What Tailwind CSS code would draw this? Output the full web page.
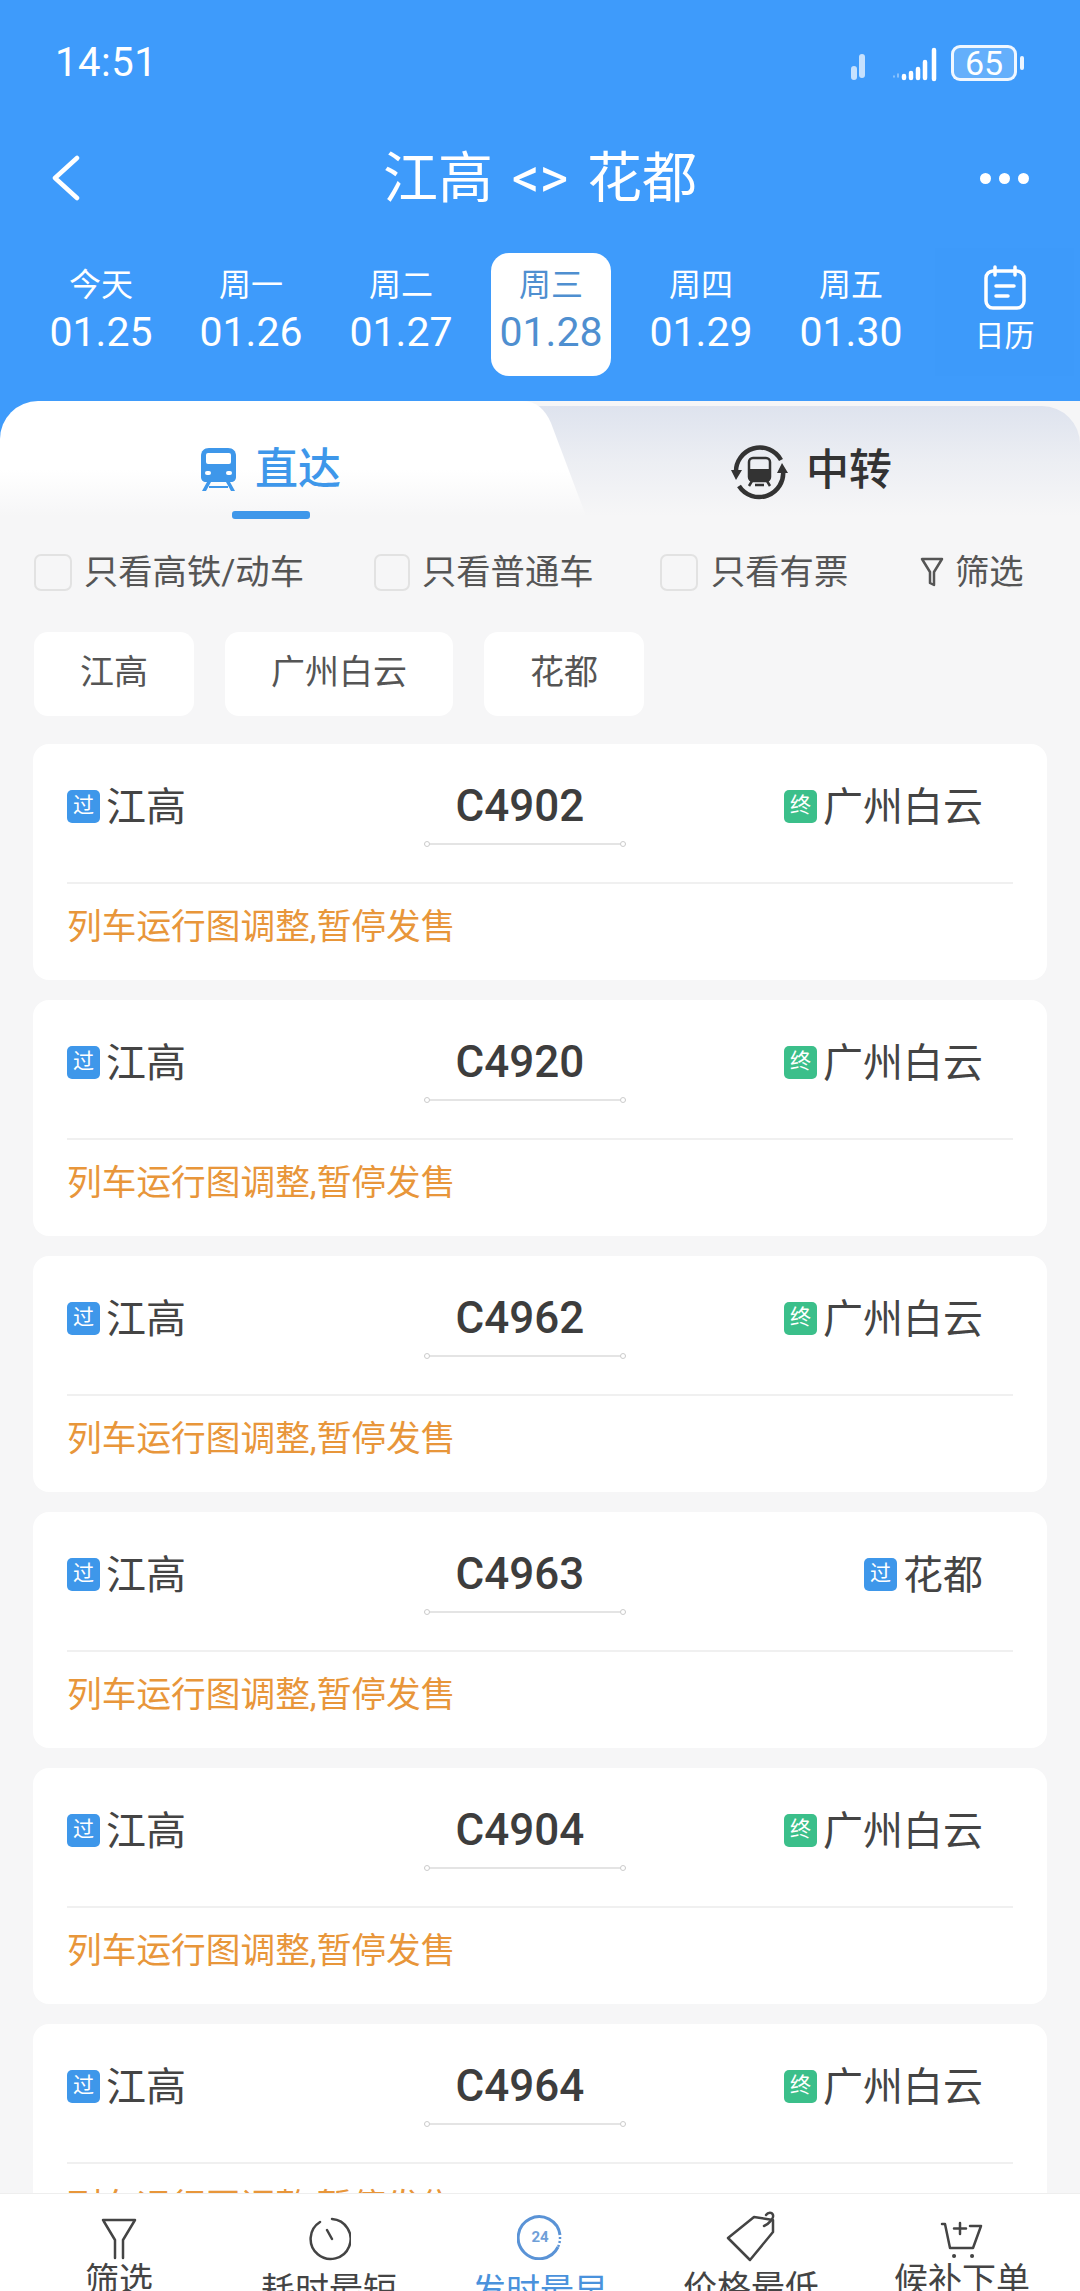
<!doctype html>
<html lang="zh">
<head>
<meta charset="utf-8">
<script src="https://cdn.jsdelivr.net/npm/@tailwindcss/browser@4"></script>
</head>
<body>
<div class="relative w-[1080px] h-[2291px] overflow-hidden bg-[#3e9bfb] font-['Roboto','Noto_Sans_CJK_SC',sans-serif] text-[#333]">

  <!-- header -->
  <header class="h-[401px] text-white">
    <div class="h-[126px] flex items-center justify-between pl-[55px] pr-[56px]">
      <span class="text-[40px] tracking-[0.5px]">14:51</span>
      <div class="flex items-center">
        <svg class="w-[100px] h-[40px]" viewBox="0 0 100 40" fill="none" stroke="#fff" stroke-linecap="round">
          <path d="M12 34v-8M20 32V14" stroke-width="6" opacity=".7"/>
          <path d="M52 34v-1" stroke-width="1.5" opacity=".5"/><path d="M56 34v-3" stroke-width="1.5" opacity=".5"/>
          <path d="M62 35v-2M69 35v-5M76 35v-9M83 35V19" stroke-width="4.5"/><path d="M92 36V7" stroke-width="4.5"/>
        </svg>
        <div class="ml-[9px] relative w-[66px] h-[36px] rounded-[9px] border-[3px] border-white/90 bg-white/20 flex items-center justify-center text-[34px] leading-none">65</div>
        <div class="ml-[3px] w-[4px] h-[14px] rounded-full bg-white/90"></div>
      </div>
    </div>
    <div class="h-[104px] flex items-center justify-between pl-[52px] pr-[51px]">
      <svg class="w-[28px] h-[46px]" viewBox="0 0 28 46" fill="none" stroke="#fff" stroke-width="4.5" stroke-linecap="round" stroke-linejoin="round"><path d="M25 3 3 23l22 20"/></svg>
      <div class="text-[55px] font-normal leading-none translate-x-[10px] [word-spacing:5px]">江高 &lt;&gt; 花都</div>
      <div class="flex gap-[8px]">
        <span class="w-[11px] h-[11px] rounded-full bg-white"></span>
        <span class="w-[11px] h-[11px] rounded-full bg-white"></span>
        <span class="w-[11px] h-[11px] rounded-full bg-white"></span>
      </div>
    </div>
    <div class="mt-[23px] h-[123px] flex pl-[26px] relative">
      <div class="w-[150px] flex flex-col items-center pt-[13px]"><span class="text-[32px] leading-[38px]">今天</span><span class="text-[41px] leading-[46px] mt-[5px]">01.25</span></div>
      <div class="w-[150px] flex flex-col items-center pt-[13px]"><span class="text-[32px] leading-[38px]">周一</span><span class="text-[41px] leading-[46px] mt-[5px]">01.26</span></div>
      <div class="w-[150px] flex flex-col items-center pt-[13px]"><span class="text-[32px] leading-[38px]">周二</span><span class="text-[41px] leading-[46px] mt-[5px]">01.27</span></div>
      <div class="w-[150px] flex justify-center">
        <div class="w-[120px] h-[123px] bg-white rounded-[18px] text-[#4f8fd0] flex flex-col items-center pt-[13px]"><span class="text-[32px] leading-[38px]">周三</span><span class="text-[41px] leading-[46px] mt-[5px]">01.28</span></div>
      </div>
      <div class="w-[150px] flex flex-col items-center pt-[13px]"><span class="text-[32px] leading-[38px]">周四</span><span class="text-[41px] leading-[46px] mt-[5px]">01.29</span></div>
      <div class="w-[150px] flex flex-col items-center pt-[13px]"><span class="text-[32px] leading-[38px]">周五</span><span class="text-[41px] leading-[46px] mt-[5px]">01.30</span></div>
      <div class="ml-[9px] w-[139px] -mt-[5px] h-[128px] bg-[#3d9afa] flex flex-col items-center pt-[17px]">
        <svg class="w-[44px] h-[46px]" viewBox="0 0 44 46" fill="none" stroke="#fff" stroke-width="3.5" stroke-linecap="round" stroke-linejoin="round">
          <rect x="3" y="6" width="38" height="37" rx="7"/><path d="M12 2v8M32 2v8M13 21h18M13 31h12"/>
        </svg>
        <span class="text-[30px] leading-[36px] mt-[7px]">日历</span>
      </div>
    </div>
  </header>

  <!-- panel -->
  <main class="bg-[#f6f6f7] rounded-tl-[38px] h-[1890px]">
    <div class="relative h-[115px] flex">
      <div class="absolute left-[500px] right-0 top-[5px] bottom-0 rounded-tr-[38px] bg-linear-to-b from-[#dee3ee] via-[#eceef3] to-[#f6f6f7]"></div>
      <div class="absolute left-0 right-[580px] top-0 bottom-0 bg-[#3e9bfb]"></div>
      <svg class="absolute left-0 top-0 w-[600px] h-[115px]" viewBox="0 0 600 115" preserveAspectRatio="none">
        <defs><linearGradient id="t" x1="0" y1="0" x2="0" y2="1"><stop offset="0" stop-color="#fff"/><stop offset=".6" stop-color="#fff"/><stop offset="1" stop-color="#f6f6f7"/></linearGradient></defs>
        <path d="M38 0H522C536 0 545 8 551 22L586 115H0V38A38 38 0 0 1 38 0Z" fill="url(#t)"/>
      </svg>
      <div class="relative w-[540px] pl-[200px] pt-[45px]">
        <div class="inline-flex flex-col items-center">
          <div class="flex items-center h-[46px]">
            <svg class="w-[37px] h-[44px]" viewBox="0 0 37 44" fill="#3e97ea">
              <path d="M9 1h19c5 0 8 3 8 8v21c0 3-2 5-5 5H6c-3 0-5-2-5-5V9c0-5 3-8 8-8Z"/>
              <rect x="6" y="6" width="25" height="11" rx="2" fill="#fff"/>
              <rect x="5" y="24" width="6" height="4" rx="2" fill="#fff"/><rect x="26" y="24" width="6" height="4" rx="2" fill="#fff"/>
              <path d="M7 35 2 44h4l5-9ZM30 35l5 9h-4l-5-9ZM9 39h19v2H9Z"/>
            </svg>
            <span class="ml-[18px] text-[43px] leading-none font-medium text-[#3e97ea]">直达</span>
          </div>
          <div class="mt-[19px] w-[78px] h-[8px] rounded-[3px] bg-[#3e97ea]"></div>
        </div>
      </div>
      <div class="relative flex-1 pl-[191px] pt-[42px]">
        <div class="flex items-center h-[57px]">
          <svg class="w-[57px] h-[57px]" viewBox="0 0 57 57" fill="none">
            <path d="M5 30A24 24 0 0 1 50 17M52 27A24 24 0 0 1 8 43" stroke="#333" stroke-width="4.5"/>
            <path d="M0 27h11L5 37ZM46 30h11l-6-10Z" fill="#333"/>
            <rect x="18" y="15" width="21" height="23" rx="4" stroke="#333" stroke-width="2.5"/>
            <path d="M18 26h21v8a4 4 0 0 1-4 4H22a4 4 0 0 1-4-4Z" fill="#333"/>
            <path d="m21 38-3 5M36 38l3 5M24 42h9" stroke="#333" stroke-width="2.5"/>
          </svg>
          <span class="ml-[18px] -mt-[3px] text-[43px] leading-none font-medium text-[#333]">中转</span>
        </div>
      </div>
    </div>

    <div class="mt-[36px] h-[40px] pl-[34px] flex items-center text-[34.3px] leading-none text-[#555]">
      <div class="w-[340px] flex items-center"><span class="w-[38px] h-[37px] mr-[12px] rounded-[7px] border-2 border-[#e2e2e2]"></span>只看高铁/动车</div>
      <div class="w-[286px] flex items-center"><span class="w-[36px] h-[37px] mr-[12px] rounded-[7px] border-2 border-[#e2e2e2]"></span>只看普通车</div>
      <div class="w-[260px] flex items-center"><span class="w-[38px] h-[37px] mr-[13px] rounded-[7px] border-2 border-[#e2e2e2]"></span>只看有票</div>
      <div class="flex items-center">
        <svg class="w-[24px] h-[32px] mr-[11px]" viewBox="0 0 24 32" fill="none" stroke="#555" stroke-width="2.5" stroke-linejoin="round"><path d="M2 3h20l-8 13v13l-4-2V16Z"/></svg>筛选
      </div>
    </div>

    <div class="mt-[40px] pl-[34px] flex gap-[31px] text-[34px] text-[#555]">
      <div class="h-[84px] px-[46px] pb-[3px] rounded-[14px] bg-white flex items-center">江高</div>
      <div class="h-[84px] px-[46px] pb-[3px] rounded-[14px] bg-white flex items-center">广州白云</div>
      <div class="h-[84px] px-[46px] pb-[3px] rounded-[14px] bg-white flex items-center">花都</div>
    </div>

    <div class="mt-[28px] mx-[33px] flex flex-col gap-[20px]">

      <article class="bg-white rounded-[16px] h-[236px] px-[34px] pt-[38px]">
        <div class="flex h-[63px]">
          <div class="w-[357px] h-[48px] flex items-center"><span class="w-[33px] h-[33px] rounded-[5px] bg-[#3e97ea] text-white text-[21px] flex items-center justify-center">过</span><span class="ml-[6px] pt-[3px] text-[40px] leading-none text-[#444]">江高</span></div>
          <div class="w-[202px] flex flex-col"><div class="h-[48px] flex items-center justify-center pr-[10px] text-[44px] font-medium leading-none text-[#3d3d3d]">C4902</div><div class="mt-[13px] h-[2px] bg-[#e4e4e4] flex justify-between items-center"><span class="w-[6px] h-[6px] rounded-full border border-[#ccc] bg-white"></span><span class="w-[6px] h-[6px] rounded-full border border-[#ccc] bg-white"></span></div></div>
          <div class="flex-1 h-[48px] flex items-center justify-end pr-[30px]"><span class="w-[33px] h-[33px] rounded-[5px] bg-[#3bbf8a] text-white text-[21px] flex items-center justify-center">终</span><span class="ml-[6px] pt-[3px] text-[40px] leading-none text-[#444]">广州白云</span></div>
        </div>
        <div class="mt-[37px] h-[2px] bg-[#f0f0f0]"></div>
        <div class="mt-[18px] h-[48px] pt-[2px] flex items-center text-[34.7px] text-[#e8963a] leading-none">列车运行图调整,暂停发售</div>
      </article>

      <article class="bg-white rounded-[16px] h-[236px] px-[34px] pt-[38px]">
        <div class="flex h-[63px]">
          <div class="w-[357px] h-[48px] flex items-center"><span class="w-[33px] h-[33px] rounded-[5px] bg-[#3e97ea] text-white text-[21px] flex items-center justify-center">过</span><span class="ml-[6px] pt-[3px] text-[40px] leading-none text-[#444]">江高</span></div>
          <div class="w-[202px] flex flex-col"><div class="h-[48px] flex items-center justify-center pr-[10px] text-[44px] font-medium leading-none text-[#3d3d3d]">C4920</div><div class="mt-[13px] h-[2px] bg-[#e4e4e4] flex justify-between items-center"><span class="w-[6px] h-[6px] rounded-full border border-[#ccc] bg-white"></span><span class="w-[6px] h-[6px] rounded-full border border-[#ccc] bg-white"></span></div></div>
          <div class="flex-1 h-[48px] flex items-center justify-end pr-[30px]"><span class="w-[33px] h-[33px] rounded-[5px] bg-[#3bbf8a] text-white text-[21px] flex items-center justify-center">终</span><span class="ml-[6px] pt-[3px] text-[40px] leading-none text-[#444]">广州白云</span></div>
        </div>
        <div class="mt-[37px] h-[2px] bg-[#f0f0f0]"></div>
        <div class="mt-[18px] h-[48px] pt-[2px] flex items-center text-[34.7px] text-[#e8963a] leading-none">列车运行图调整,暂停发售</div>
      </article>

      <article class="bg-white rounded-[16px] h-[236px] px-[34px] pt-[38px]">
        <div class="flex h-[63px]">
          <div class="w-[357px] h-[48px] flex items-center"><span class="w-[33px] h-[33px] rounded-[5px] bg-[#3e97ea] text-white text-[21px] flex items-center justify-center">过</span><span class="ml-[6px] pt-[3px] text-[40px] leading-none text-[#444]">江高</span></div>
          <div class="w-[202px] flex flex-col"><div class="h-[48px] flex items-center justify-center pr-[10px] text-[44px] font-medium leading-none text-[#3d3d3d]">C4962</div><div class="mt-[13px] h-[2px] bg-[#e4e4e4] flex justify-between items-center"><span class="w-[6px] h-[6px] rounded-full border border-[#ccc] bg-white"></span><span class="w-[6px] h-[6px] rounded-full border border-[#ccc] bg-white"></span></div></div>
          <div class="flex-1 h-[48px] flex items-center justify-end pr-[30px]"><span class="w-[33px] h-[33px] rounded-[5px] bg-[#3bbf8a] text-white text-[21px] flex items-center justify-center">终</span><span class="ml-[6px] pt-[3px] text-[40px] leading-none text-[#444]">广州白云</span></div>
        </div>
        <div class="mt-[37px] h-[2px] bg-[#f0f0f0]"></div>
        <div class="mt-[18px] h-[48px] pt-[2px] flex items-center text-[34.7px] text-[#e8963a] leading-none">列车运行图调整,暂停发售</div>
      </article>

      <article class="bg-white rounded-[16px] h-[236px] px-[34px] pt-[38px]">
        <div class="flex h-[63px]">
          <div class="w-[357px] h-[48px] flex items-center"><span class="w-[33px] h-[33px] rounded-[5px] bg-[#3e97ea] text-white text-[21px] flex items-center justify-center">过</span><span class="ml-[6px] pt-[3px] text-[40px] leading-none text-[#444]">江高</span></div>
          <div class="w-[202px] flex flex-col"><div class="h-[48px] flex items-center justify-center pr-[10px] text-[44px] font-medium leading-none text-[#3d3d3d]">C4963</div><div class="mt-[13px] h-[2px] bg-[#e4e4e4] flex justify-between items-center"><span class="w-[6px] h-[6px] rounded-full border border-[#ccc] bg-white"></span><span class="w-[6px] h-[6px] rounded-full border border-[#ccc] bg-white"></span></div></div>
          <div class="flex-1 h-[48px] flex items-center justify-end pr-[30px]"><span class="w-[33px] h-[33px] rounded-[5px] bg-[#3e97ea] text-white text-[21px] flex items-center justify-center">过</span><span class="ml-[6px] pt-[3px] text-[40px] leading-none text-[#444]">花都</span></div>
        </div>
        <div class="mt-[37px] h-[2px] bg-[#f0f0f0]"></div>
        <div class="mt-[18px] h-[48px] pt-[2px] flex items-center text-[34.7px] text-[#e8963a] leading-none">列车运行图调整,暂停发售</div>
      </article>

      <article class="bg-white rounded-[16px] h-[236px] px-[34px] pt-[38px]">
        <div class="flex h-[63px]">
          <div class="w-[357px] h-[48px] flex items-center"><span class="w-[33px] h-[33px] rounded-[5px] bg-[#3e97ea] text-white text-[21px] flex items-center justify-center">过</span><span class="ml-[6px] pt-[3px] text-[40px] leading-none text-[#444]">江高</span></div>
          <div class="w-[202px] flex flex-col"><div class="h-[48px] flex items-center justify-center pr-[10px] text-[44px] font-medium leading-none text-[#3d3d3d]">C4904</div><div class="mt-[13px] h-[2px] bg-[#e4e4e4] flex justify-between items-center"><span class="w-[6px] h-[6px] rounded-full border border-[#ccc] bg-white"></span><span class="w-[6px] h-[6px] rounded-full border border-[#ccc] bg-white"></span></div></div>
          <div class="flex-1 h-[48px] flex items-center justify-end pr-[30px]"><span class="w-[33px] h-[33px] rounded-[5px] bg-[#3bbf8a] text-white text-[21px] flex items-center justify-center">终</span><span class="ml-[6px] pt-[3px] text-[40px] leading-none text-[#444]">广州白云</span></div>
        </div>
        <div class="mt-[37px] h-[2px] bg-[#f0f0f0]"></div>
        <div class="mt-[18px] h-[48px] pt-[2px] flex items-center text-[34.7px] text-[#e8963a] leading-none">列车运行图调整,暂停发售</div>
      </article>

      <article class="bg-white rounded-[16px] h-[236px] px-[34px] pt-[38px]">
        <div class="flex h-[63px]">
          <div class="w-[357px] h-[48px] flex items-center"><span class="w-[33px] h-[33px] rounded-[5px] bg-[#3e97ea] text-white text-[21px] flex items-center justify-center">过</span><span class="ml-[6px] pt-[3px] text-[40px] leading-none text-[#444]">江高</span></div>
          <div class="w-[202px] flex flex-col"><div class="h-[48px] flex items-center justify-center pr-[10px] text-[44px] font-medium leading-none text-[#3d3d3d]">C4964</div><div class="mt-[13px] h-[2px] bg-[#e4e4e4] flex justify-between items-center"><span class="w-[6px] h-[6px] rounded-full border border-[#ccc] bg-white"></span><span class="w-[6px] h-[6px] rounded-full border border-[#ccc] bg-white"></span></div></div>
          <div class="flex-1 h-[48px] flex items-center justify-end pr-[30px]"><span class="w-[33px] h-[33px] rounded-[5px] bg-[#3bbf8a] text-white text-[21px] flex items-center justify-center">终</span><span class="ml-[6px] pt-[3px] text-[40px] leading-none text-[#444]">广州白云</span></div>
        </div>
        <div class="mt-[37px] h-[2px] bg-[#f0f0f0]"></div>
        <div class="mt-[18px] h-[48px] pt-[2px] flex items-center text-[34.7px] text-[#e8963a] leading-none">列车运行图调整,暂停发售</div>
      </article>
    </div>
  </main>

  <!-- bottom bar overlays the list -->
  <nav class="absolute left-0 right-0 top-[2193px] h-[98px] bg-white border-t border-[#eeeeee] grid grid-cols-5 text-[34px] leading-none text-[#444] overflow-hidden">
    <div class="flex flex-col items-center translate-x-[11px]">
      <svg class="mt-[24px] w-[36px] h-[42px]" viewBox="0 0 36 42" fill="none" stroke="#444" stroke-width="2.5" stroke-linejoin="round" stroke-linecap="round"><path d="M2 2h32L22 22v18M14 40V22L2 2"/></svg>
      <span class="mt-[3px]">筛选</span>
    </div>
    <div class="flex flex-col items-center translate-x-[5px]">
      <svg class="mt-[21px] w-[44px] h-[46px]" viewBox="0 0 44 46" fill="none" stroke="#444" stroke-width="2.5" stroke-linecap="round"><path d="M13 7A20 20 0 1 0 25 4M20 15l5 9"/></svg>
      <span class="mt-[12px]">耗时最短</span>
    </div>
    <div class="flex flex-col items-center text-[#4a92dc]">
      <div class="relative mt-[20px] w-[46px] h-[46px] flex items-center justify-center text-[15px] font-bold text-[#6f9fd8]">
        <svg class="absolute inset-0" viewBox="0 0 46 46" fill="none" stroke="#5a93d6"><path d="M41 33A21 21 0 1 1 43 21" stroke-width="3"/><path d="M43 23A21 21 0 0 1 41 33" stroke-width="2.5" stroke-dasharray="2 2"/></svg>
        24
      </div>
      <span class="mt-[14px]">发时最早</span>
    </div>
    <div class="flex flex-col items-center -translate-x-[5px]">
      <svg class="mt-[17px] w-[50px] h-[52px]" viewBox="0 0 50 52" fill="none" stroke="#444" stroke-width="2.5" stroke-linejoin="round" stroke-linecap="round"><path d="M28 6 2 27l22 22 23-28V9Z"/><path d="M38 15c5-2 10-8 9-11-1-3-5-3-7 0"/></svg>
      <span class="mt-[8px]">价格最低</span>
    </div>
    <div class="flex flex-col items-center -translate-x-[10px]">
      <svg class="mt-[26px] w-[44px] h-[38px]" viewBox="0 0 44 38" fill="none" stroke="#444" stroke-width="2.5" stroke-linecap="round" stroke-linejoin="round"><path d="M2 4h3l5 24h23l8-22H30M20 3v11M14 8.500h12"/><path d="M14 36h.1M32 36h.1" stroke-width="4"/></svg>
      <span class="mt-[5px]">候补下单</span>
    </div>
  </nav>
</div>
</body>
</html>
